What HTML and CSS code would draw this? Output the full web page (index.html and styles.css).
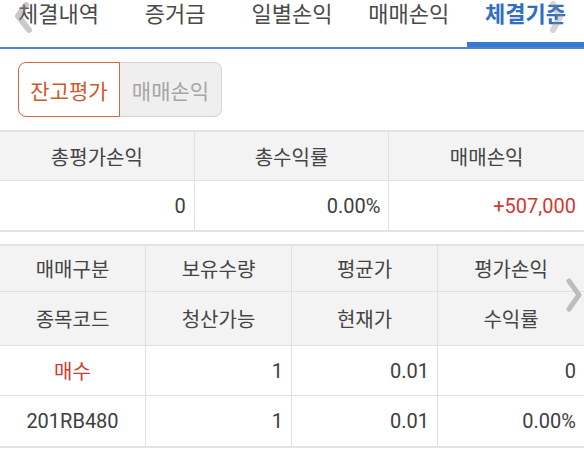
FILE: index.html
```html
<!DOCTYPE html>
<html lang="ko">
<head>
<meta charset="utf-8">
<title>체결기준</title>
<link rel="stylesheet" href="styles.css">
</head>
<body>
<div class="page">
  <nav class="tabs">
    <div class="tab">체결내역</div>
    <div class="tab">증거금</div>
    <div class="tab">일별손익</div>
    <div class="tab">매매손익</div>
    <div class="tab active">체결기준</div>
    <svg class="fade fade-left" width="20" height="32" viewBox="0 0 20 32"><path d="M11 4 L3 15 L14 29" fill="none" stroke="#8a8a8a" stroke-width="6" stroke-linecap="round" stroke-linejoin="round"/></svg>
    <svg class="fade fade-right" width="16" height="34" viewBox="0 0 16 34"><path d="M4 4 L11 17 L4 30" fill="none" stroke="#8a8a8a" stroke-width="6" stroke-linecap="round" stroke-linejoin="round"/></svg>
  </nav>

  <div class="segment">
    <div class="seg on">잔고평가</div>
    <div class="seg off">매매손익</div>
  </div>

  <div class="grid g3">
    <div class="c h r1">총평가손익</div>
    <div class="c h r1">총수익률</div>
    <div class="c h r1">매매손익</div>
    <div class="c d num r1">0</div>
    <div class="c d num r1">0.00%</div>
    <div class="c d num red r1">+507,000</div>
  </div>

  <div class="wrap">
    <div class="grid g4">
      <div class="c h ra">매매구분</div>
      <div class="c h ra">보유수량</div>
      <div class="c h ra">평균가</div>
      <div class="c h ra">평가손익</div>
      <div class="c h rb">종목코드</div>
      <div class="c h rb">청산가능</div>
      <div class="c h rb">현재가</div>
      <div class="c h rb">수익률</div>
      <div class="c d ctr red rc">매수</div>
      <div class="c d num rc">1</div>
      <div class="c d num rc">0.01</div>
      <div class="c d num rc">0</div>
      <div class="c d ctr rd">201RB480</div>
      <div class="c d num rd">1</div>
      <div class="c d num rd">0.01</div>
      <div class="c d num rd">0.00%</div>
    </div>
    <svg class="next" width="18" height="36" viewBox="0 0 18 36"><path d="M4 4 L14 18 L4 32" fill="none" stroke="#bdbdbd" stroke-width="5" stroke-linecap="round" stroke-linejoin="round"/></svg>
  </div>
</div>
</body>
</html>
```

FILE: styles.css
```css
* { box-sizing: border-box; }
html, body { margin: 0; padding: 0; background: #fff; }
body {
  font-family: Roboto, "Noto Sans CJK KR", sans-serif;
  color: #444;
  width: 584px;
  height: 450px;
  overflow: hidden;
}
.page { width: 584px; }

.tabs {
  position: relative;
  display: flex;
  height: 49px;
  border-bottom: 2px solid #4a86d4;
}
.tab {
  flex: 1;
  text-align: center;
  font-size: 22px;
  line-height: 30px;
  color: #4a4a4a;
  border-bottom: 5px solid transparent;
}
.tab.active {
  color: #2f6ec4;
  font-weight: 700;
  border-bottom-color: #3a78cc;
}
.fade { position: absolute; opacity: 0.45; }
.fade-left { left: 15px; top: 1px; }
.fade-right { left: 549px; top: 0; opacity: 0.35; }

.segment {
  display: flex;
  margin: 13px 0 0 18px;
}
.seg {
  width: 102px;
  height: 55px;
  display: flex;
  align-items: center;
  justify-content: center;
  font-size: 21px;
}
.seg.on {
  color: #d0582a;
  border: 1.5px solid #d6683c;
  border-radius: 8px 0 0 8px;
  background: #fff;
}
.seg.off {
  color: #a6a6a6;
  background: #efefef;
  border: 1.5px solid #d4d4d4;
  border-left: none;
  border-radius: 0 8px 8px 0;
}

.grid {
  display: grid;
  border-top: 2px solid #e2e2e2;
  border-bottom: 2px solid #e2e2e2;
}
.g3 {
  grid-template-columns: repeat(3, 1fr);
  margin-top: 13px;
}
.g4 {
  grid-template-columns: repeat(4, 1fr);
}
.wrap {
  position: relative;
  margin-top: 12px;
}
.c {
  display: flex;
  align-items: center;
  border-right: 1px solid #e0e0e0;
  border-bottom: 1px solid #e0e0e0;
}
.g3 .c:nth-child(3n), .g4 .c:nth-child(4n) { border-right: none; }
.g3 .c:nth-child(n+4), .g4 .c:nth-child(n+13) { border-bottom: none; }
.h {
  background: #f3f3f3;
  justify-content: center;
  font-size: 20px;
  color: #444;
}
.d {
  background: #fff;
  font-size: 20px;
  color: #3e3e3e;
}
.num { justify-content: flex-end; padding-right: 8px; }
.ctr { justify-content: center; }
.red { color: #d03a32; }
.r1 { height: 49px; }
.ra { height: 46px; }
.rb { height: 54px; }
.rc { height: 50px; }
.rd { height: 50px; }
.next { position: absolute; left: 565px; top: 33px; }
```
